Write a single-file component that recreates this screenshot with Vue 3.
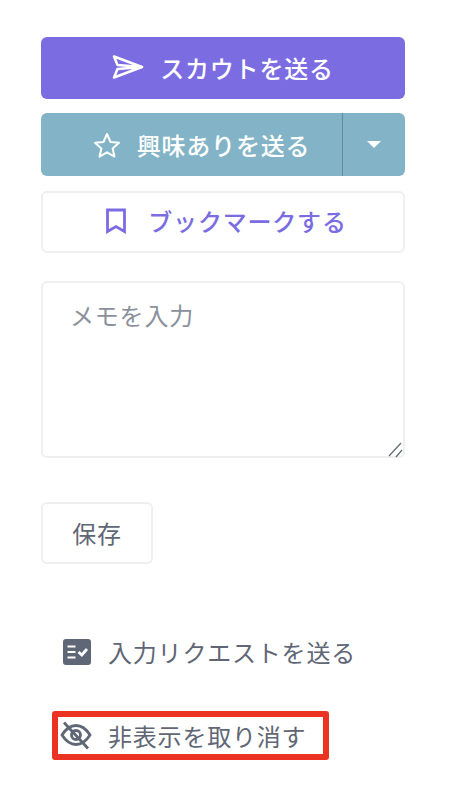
<script setup>
const actions = [
  { id: 'request', label: '入力リクエストを送る' },
  { id: 'hide', label: '非表示を取り消す' },
]
</script>

<template>
  <div class="panel">
    <button class="btn scout">
      <svg class="ic" width="32" height="26" viewBox="0 0 32 26" fill="none" stroke="#fff" stroke-width="2.500" stroke-linejoin="round">
        <path d="M2 2.500 L30 13 L5.500 11 Z" />
        <path d="M2 23.500 L30 13 L5.500 15 Z" />
      </svg>
      <span>スカウトを送る</span>
    </button>

    <div class="split">
      <button class="btn interest">
        <svg class="ic" width="28" height="26" viewBox="0 0 28 26" fill="none" stroke="#fff" stroke-width="2" stroke-linejoin="round">
          <path d="M14 2 L17.500 10 L26 10.800 L19.600 16.400 L21.500 24.600 L14 20.300 L6.500 24.600 L8.400 16.400 L2 10.800 L10.500 10 Z" />
        </svg>
        <span>興味ありを送る</span>
      </button>
      <button class="caret-btn" aria-label="menu"><i class="caret"></i></button>
    </div>

    <button class="btn bookmark">
      <svg class="ic" width="22" height="26" viewBox="0 0 22 26" fill="none" stroke="#7b6ce2" stroke-width="2.800" stroke-linejoin="miter">
        <path d="M2.500 2 H19.500 V23.500 L11 18.500 L2.500 23.500 Z" />
      </svg>
      <span>ブックマークする</span>
    </button>

    <div class="memo-wrap">
      <textarea class="memo" placeholder="メモを入力"></textarea>
      <svg class="grip" width="16" height="16" viewBox="0 0 16 16" fill="none" stroke="#666b75" stroke-width="1.300">
        <path d="M2 14 L14 1 M9 15 L15 8" />
      </svg>
    </div>

    <button class="btn save">保存</button>

    <ul class="actions">
      <li v-for="a in actions" :key="a.id" :class="['action', a.id]">
        <svg v-if="a.id === 'request'" class="act-ic" width="30" height="28" viewBox="0 0 30 28">
          <rect x="1" y="1" width="28" height="26" rx="3" fill="#5f6675" />
          <path d="M5.500 8.500 H13.500 M5.500 14 H13.500 M5.500 19.500 H13.500" stroke="#fff" stroke-width="2" fill="none" />
          <path d="M16.500 14 L19.800 17 L25 11" stroke="#fff" stroke-width="2.800" fill="none" />
        </svg>
        <svg v-else class="act-ic" width="32" height="30" viewBox="0 0 32 30" fill="none" stroke="#5f6675" stroke-width="2.800">
          <path d="M2 14 C7 6 12 4.500 16 4.500 C20 4.500 25 6 30 14 C25 22 20 23.500 16 23.500 C12 23.500 7 22 2 14 Z" />
          <circle cx="16" cy="14" r="4.500" />
          <path d="M4 1.500 L28 27.500" />
        </svg>
        <span>{{ a.label }}</span>
      </li>
    </ul>
  </div>
</template>

<style>
html, body { margin: 0; background: #fff; }
</style>

<style scoped>
.panel {
  width: 364px;
  margin-left: 41px;
  padding-top: 37px;
  display: flex;
  flex-direction: column;
  font-family: "Noto Sans CJK JP", "Noto Sans", sans-serif;
}
.btn {
  height: 62px;
  display: flex;
  align-items: center;
  justify-content: center;
  gap: 16px;
  border: 2px solid transparent;
  border-radius: 6px;
  font: inherit;
  font-size: 24px;
  font-weight: 500;
  letter-spacing: 0.800px;
  padding: 0;
  box-sizing: border-box;
}
.ic { flex: none; }
.scout {
  background: #7b6ce2;
  color: #fff;
  padding-bottom: 2px;
}
.split {
  margin-top: 14px;
  display: flex;
  height: 63px;
  background: #82b3c7;
  border-radius: 6px;
  overflow: hidden;
}
.interest {
  flex: 1;
  height: 100%;
  background: transparent;
  color: #fff;
  border: 0;
  border-right: 1px solid #5f8aa0;
  border-radius: 0;
  padding-left: 20px;
}
.caret-btn {
  width: 62px;
  background: transparent;
  border: 0;
  padding: 0;
  display: flex;
  align-items: center;
  justify-content: center;
}
.caret {
  width: 0;
  height: 0;
  border-left: 7px solid transparent;
  border-right: 7px solid transparent;
  border-top: 7px solid #fff;
}
.bookmark {
  margin-top: 15px;
  background: #fff;
  border-color: #eeeff0;
  color: #7b6ce2;
  gap: 21px;
  padding-left: 6px;
  padding-bottom: 3px;
}
.memo-wrap {
  position: relative;
  margin-top: 28px;
  height: 177px;
}
.memo {
  display: block;
  height: 100%;
  width: 100%;
  box-sizing: border-box;
  border: 2px solid #eeeff0;
  border-radius: 6px;
  padding: 14px 27px;
  font: inherit;
  font-size: 24px;
  letter-spacing: 0.800px;
  color: #5f6675;
  outline: none;
  resize: none;
}
.memo::placeholder { color: #8b909c; opacity: 1; }
.grip {
  position: absolute;
  right: 2px;
  bottom: 0;
  pointer-events: none;
}
.save {
  margin-top: 44px;
  width: 112px;
  height: 62px;
  background: #fff;
  border-color: #eeeff0;
  color: #5f6675;
  font-weight: 400;
  padding-bottom: 2px;
}
.actions {
  list-style: none;
  margin: 63px 0 0 11px;
  padding: 0;
  display: flex;
  flex-direction: column;
  gap: 35px;
  color: #5f6675;
  font-size: 24px;
  letter-spacing: 0.800px;
}
.action {
  display: flex;
  align-items: center;
  gap: 16px;
  height: 49px;
  box-sizing: border-box;
  padding-left: 10px;
}
.hide {
  width: 277px;
  border: 6px solid #ea3323;
  border-radius: 3px;
  padding-left: 2px;
  gap: 16px;
}
</style>
